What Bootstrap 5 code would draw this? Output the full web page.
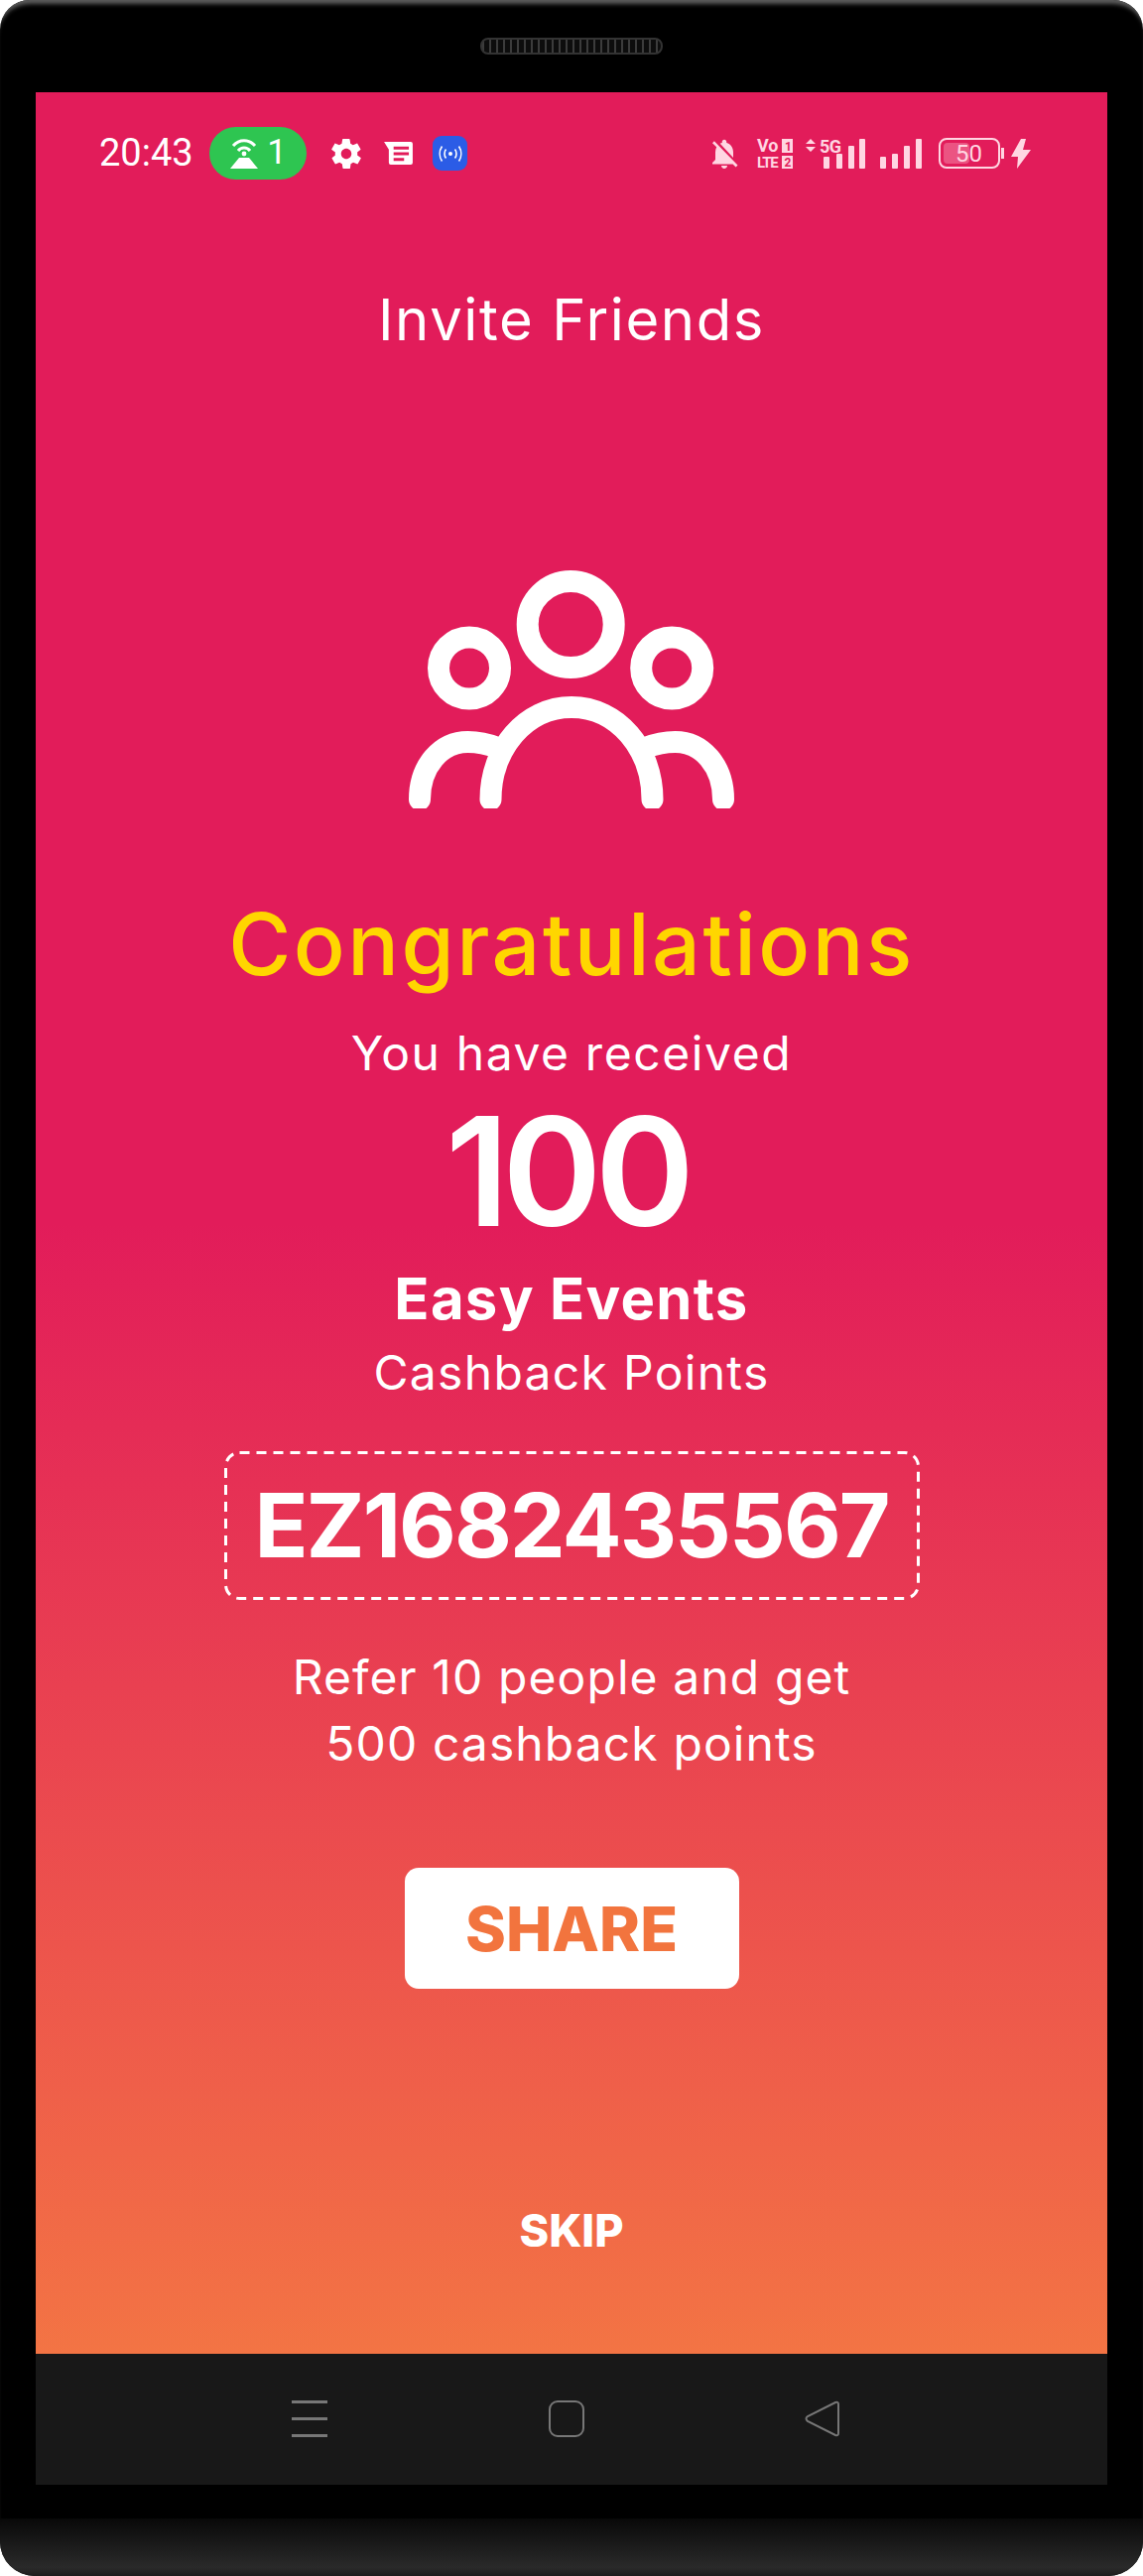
<!DOCTYPE html>
<html lang="en">

<head>
    <meta charset="UTF-8" />
    <meta name="viewport" content="width=device-width, initial-scale=1.0" />
    <title>Invite Friends</title>
    <link href="https://cdn.jsdelivr.net/npm/bootstrap@5.3.3/dist/css/bootstrap.min.css" rel="stylesheet" />
    <style>
        body {
            background: #fff;
            font-family: "Inter", "Liberation Sans", sans-serif;
            overflow: hidden;
        }

        .phone-frame {
            width: 1152px;
            height: 2597px;
            background: #000;
            border-radius: 30px 30px 35px 35px;
            box-shadow: inset 0 7px 4px -3px #5c5c5c;
            position: relative;
            overflow: hidden;
        }

        .phone-top {
            height: 93px;
            padding-top: 38px;
        }

        .speaker {
            width: 184px;
            height: 17px;
            border-radius: 8px;
            background: repeating-linear-gradient(90deg, #3c3c3c 0 2px, #0d0d0d 2px 7px);
            border: 2px solid #333;
        }

        .phone-screen {
            margin: 0 36px;
            height: 2412px;
        }

        .app-view {
            height: 2280px;
            background: linear-gradient(#e21c5a 50%, #f37444 100%);
            color: #fff;
        }

        .status-row {
            height: 53px;
            margin-top: 35px;
            padding: 0 77px 0 64px;
        }

        .status-row svg {
            overflow: visible;
        }

        .clock {
            font-family: "Roboto", sans-serif;
            font-size: 38px;
            line-height: 53px;
            width: 92px;
        }

        .wifi-pill {
            width: 98px;
            height: 53px;
            margin-left: 19px;
            border-radius: 27px;
            background: #2ec551;
            font-family: "Roboto", sans-serif;
            font-size: 35px;
        }

        .gear-icon {
            margin-left: 22px;
        }

        .note-icon {
            margin-left: 20px;
        }

        .hotspot-icon {
            width: 35px;
            height: 35px;
            margin-left: 20px;
            border-radius: 9px;
            background: #2b5ce6;
        }

        .invite-title {
            font-size: 58px;
            letter-spacing: 1.6px;
            line-height: 64px;
            margin-top: 109px;
        }

        .group-icon {
            display: block;
            margin-top: 196px;
        }

        .congrats {
            color: #ffd600;
            font-size: 86px;
            font-weight: 500;
            letter-spacing: 2.5px;
            line-height: 100px;
            margin-top: 62px;
        }

        .received {
            font-size: 48px;
            letter-spacing: 1.6px;
            line-height: 60px;
            margin-top: 30px;
        }

        .points {
            font-size: 152px;
            font-weight: 600;
            letter-spacing: -7px;
            line-height: 160px;
            margin-top: 9px;
            padding-right: 10px;
        }

        .brand-name {
            font-size: 58px;
            font-weight: 700;
            letter-spacing: 1.3px;
            line-height: 60px;
            margin-top: 18px;
        }

        .points-label {
            font-size: 48px;
            letter-spacing: 1.3px;
            line-height: 50px;
            margin-top: 20px;
        }

        .code-box {
            width: 701px;
            height: 150px;
            margin-top: 54px;
            font-size: 89px;
            font-weight: 700;
            letter-spacing: -2px;
        }

        .dash-line {
            inset: 0;
        }

        .refer-note {
            font-size: 48px;
            letter-spacing: 1.1px;
            line-height: 67px;
            margin-top: 44px;
        }

        .share-btn {
            width: 337px;
            height: 122px;
            margin-top: 92px;
            border-radius: 14px;
            background: #fff;
            color: #f2743e;
            font-size: 62px;
            font-weight: 800;
        }

        .skip-link {
            color: #fff;
            font-size: 45px;
            font-weight: 800;
            line-height: 60px;
            margin-top: 214px;
        }

        .nav-strip {
            height: 132px;
            background: #181818;
            padding: 47px 270px 0 258px;
        }

        .phone-chin {
            position: absolute;
            left: 0;
            right: 0;
            bottom: 0;
            height: 58px;
            background: linear-gradient(#080808, #2a2a2a 85%, #1c1c1c);
        }
    </style>
</head>

<body>
    <div class="phone-frame">
        <div class="phone-top d-flex justify-content-center align-items-start">
            <div class="speaker"></div>
        </div>

        <div class="phone-screen">
            <main class="app-view d-flex flex-column align-items-center text-center">
                <div class="status-row d-flex align-items-center w-100">
                    <span class="clock">20:43</span>
                    <span class="wifi-pill d-flex align-items-center justify-content-center gap-2">
                        <svg width="30" height="32" viewBox="0 0 30 32" fill="none" stroke="#fff" stroke-width="3">
                            <path d="M4 8 C10 1 20 1 26 8" />
                            <path d="M9 13 C12 9 18 9 21 13" />
                            <circle cx="15" cy="16" r="2.400" fill="#fff" stroke="none" />
                            <path d="M10 20 H20 L29 31 H1 Z" fill="#fff" stroke="none" />
                        </svg>
                        <span>1</span>
                    </span>
                    <svg class="gear-icon" width="36" height="36" viewBox="0 0 24 24" fill="#fff">
                        <path d="M19.4 13c.1-.3.1-.7.1-1s0-.7-.1-1l2.100-1.600c.2-.2.2-.4.1-.6l-2-3.500c-.1-.2-.4-.3-.6-.2l-2.500 1c-.5-.4-1.100-.7-1.700-1l-.4-2.600c0-.3-.2-.5-.5-.5h-4c-.3 0-.5.2-.5.4l-.4 2.700c-.6.2-1.100.6-1.700 1l-2.500-1c-.2-.1-.5 0-.6.2l-2 3.500c-.1.2-.1.5.1.6L4.600 11c0 .3-.1.7-.1 1s0 .7.1 1l-2.100 1.600c-.2.2-.2.4-.1.6l2 3.500c.1.2.4.3.6.2l2.500-1c.5.4 1.100.7 1.700 1l.4 2.600c0 .3.2.5.5.5h4c.3 0 .5-.2.5-.4l.4-2.700c.6-.2 1.100-.6 1.700-1l2.500 1c.2.1.5 0 .6-.2l2-3.500c.1-.2.1-.5-.1-.6L19.400 13zM12 15.500c-1.900 0-3.500-1.600-3.500-3.500s1.600-3.500 3.500-3.500 3.500 1.600 3.500 3.500-1.600 3.500-3.500 3.500z" />
                    </svg>
                    <svg class="note-icon" width="29" height="25" viewBox="0 0 30 26">
                        <path fill="#fff" fill-rule="evenodd" d="M0 1 H28 Q30 1 30 3 V23 Q30 25 28 25 H7 Q5 25 5 23 V9 Z M10 6 V9 H26 V6 Z M10 12 V15 H26 V12 Z M10 18 V21 H21 V18 Z" />
                    </svg>
                    <span class="hotspot-icon d-flex align-items-center justify-content-center">
                        <svg width="24" height="18" viewBox="0 0 24 18" fill="none" stroke="#fff" stroke-width="1.600">
                            <circle cx="12" cy="9" r="2" fill="#fff" stroke="none" />
                            <path d="M7.500 4.500 C5.500 7 5.500 11 7.500 13.500 M16.500 4.500 C18.500 7 18.500 11 16.500 13.500" />
                            <path d="M3.500 1.500 C0.500 6 0.500 12 3.500 16.500 M20.500 1.500 C23.500 6 23.500 12 20.500 16.500" />
                        </svg>
                    </span>

                    <div class="ms-auto d-flex align-items-center">
                        <svg width="36" height="36" viewBox="0 0 24 24" fill="#ffd6e2">
                            <path d="M20 18.690L7.840 6.140 5.270 3.490 4 4.760l2.800 2.800v.01c-.52.990-.8 2.160-.8 3.420v5l-2 2v1h13.730l2 2L21 19.720l-1-1.030zM12 22c1.110 0 2-.89 2-2h-4c0 1.110.89 2 2 2zm6-7.320V11c0-3.080-1.640-5.640-4.500-6.320V4c0-.83-.67-1.500-1.500-1.500s-1.500.67-1.500 1.500v.68c-.15.03-.29.08-.42.12-.1.03-.2.07-.3.11h-.01c-.2.08-.4.17-.59.270-.01 0-.01 0-.02.01L18 14.680z" />
                        </svg>
                        <svg style="margin-left:15px" width="36" height="30" viewBox="0 0 36 30" fill="#ffd6e2" font-family="Roboto, sans-serif" font-weight="700">
                            <text x="0" y="13" font-size="18">Vo</text>
                            <text x="0" y="29" font-size="15" letter-spacing="-1.200">LTE</text>
                            <rect x="25" y="0" width="11" height="14" />
                            <text x="28" y="12" font-size="12" fill="#e21c5a">1</text>
                            <rect x="25" y="17" width="11" height="13" />
                            <text x="27.500" y="28" font-size="12" fill="#e21c5a">2</text>
                        </svg>
                        <svg style="margin-left:13px" width="60" height="30" viewBox="0 0 60 30" fill="#ffd6e2" font-family="Roboto, sans-serif" font-weight="700">
                            <path d="M5 0 L10 5 H0 Z M0 8 H10 L5 13 Z" />
                            <text x="14" y="14" font-size="18" letter-spacing="-.5">5G</text>
                            <rect x="18" y="18" width="6" height="12" rx="1" />
                            <rect x="31" y="15" width="6" height="15" rx="1" />
                            <rect x="43" y="7" width="6" height="23" rx="1" />
                            <rect x="54" y="0" width="6" height="30" rx="1" />
                        </svg>
                        <svg style="margin-left:15px" width="42" height="30" viewBox="0 0 42 30" fill="#ffd6e2">
                            <rect x="0" y="18" width="6" height="12" rx="1" />
                            <rect x="12" y="15" width="6" height="15" rx="1" />
                            <rect x="24" y="7" width="6" height="23" rx="1" />
                            <rect x="36" y="0" width="6" height="30" rx="1" />
                        </svg>
                        <svg style="margin-left:17px" width="66" height="31" viewBox="0 0 66 31" font-family="Roboto, sans-serif">
                            <rect x="1" y="1" width="60" height="29" rx="7" fill="none" stroke="#ffd6e2" stroke-width="2" />
                            <rect x="5" y="5" width="26" height="21" rx="4" fill="#ffd6e2" opacity=".3" />
                            <rect x="63" y="10" width="3" height="11" fill="#ffd6e2" />
                            <text x="17" y="24" font-size="24" fill="#ffd6e2">50</text>
                        </svg>
                        <svg style="margin-left:7px" width="20" height="30" viewBox="0 0 20 30" fill="#ffd6e2">
                            <path d="M10 0 L0 18 H7 L6 30 L20 11 H12 L15 0 Z" />
                        </svg>
                    </div>
                </div>

                <h1 class="invite-title fw-normal mb-0">Invite Friends</h1>

                <svg class="group-icon" width="400" height="290" viewBox="-3.500 0 400 290" fill="none" stroke="#fff" stroke-width="22" stroke-linecap="round">
                    <defs>
                        <clipPath id="icon-clip">
                            <rect x="-4" y="0" width="400" height="265" />
                        </clipPath>
                    </defs>
                    <g clip-path="url(#icon-clip)">
                        <circle cx="195.700" cy="79.500" r="43.500" />
                        <circle cx="93.500" cy="123.500" r="31" />
                        <circle cx="297.700" cy="123.500" r="31" />
                        <path d="M115 256 C115 205 150 163 196.500 163 C243 163 278 205 278 256" />
                        <path d="M43.500 256 C43.500 222 65 198 92 198 C102 198 112 200 122 204" />
                        <path d="M349.500 256 C349.500 222 328 198 301 198 C291 198 281 200 271 204" />
                    </g>
                </svg>

                <div class="congrats">Congratulations</div>
                <div class="received">You have received</div>
                <div class="points">100</div>
                <div class="brand-name">Easy Events</div>
                <div class="points-label">Cashback Points</div>
                <div class="code-box position-relative d-flex align-items-center justify-content-center">
                    <svg class="dash-line position-absolute" width="701" height="150" viewBox="0 0 701 150" fill="none" stroke="#fff" stroke-width="3">
                        <rect x="1.500" y="1.500" width="698" height="147" rx="14" stroke-dasharray="10 7" />
                    </svg>
                    EZ1682435567
                </div>
                <p class="refer-note mb-0">Refer 10 people and get<br />500 cashback points</p>
                <button type="button" class="btn share-btn d-flex align-items-center justify-content-center p-0 border-0">SHARE</button>
                <a class="skip-link text-decoration-none" href="#">SKIP</a>
            </main>
            <nav class="nav-strip d-flex justify-content-between align-items-start">
                <svg width="36" height="37" viewBox="0 0 36 37" fill="#777">
                    <rect y="0" width="36" height="3" />
                    <rect y="17" width="36" height="3" />
                    <rect y="34" width="36" height="3" />
                </svg>
                <svg width="36" height="37" viewBox="0 0 36 37" fill="none" stroke="#777" stroke-width="2">
                    <rect x="1" y="1" width="34" height="35" rx="8" />
                </svg>
                <svg width="35" height="37" viewBox="0 0 35 37" fill="none" stroke="#777" stroke-width="2">
                    <path d="M31 2 Q34 1 34 4 V33 Q34 36 31 35 L3 21 Q0 18 3 16 Z" />
                </svg>
            </nav>
        </div>
        <div class="phone-chin"></div>
    </div>
    <script src="https://cdn.jsdelivr.net/npm/bootstrap@5.3.3/dist/js/bootstrap.bundle.min.js"></script>
</body>

</html>
